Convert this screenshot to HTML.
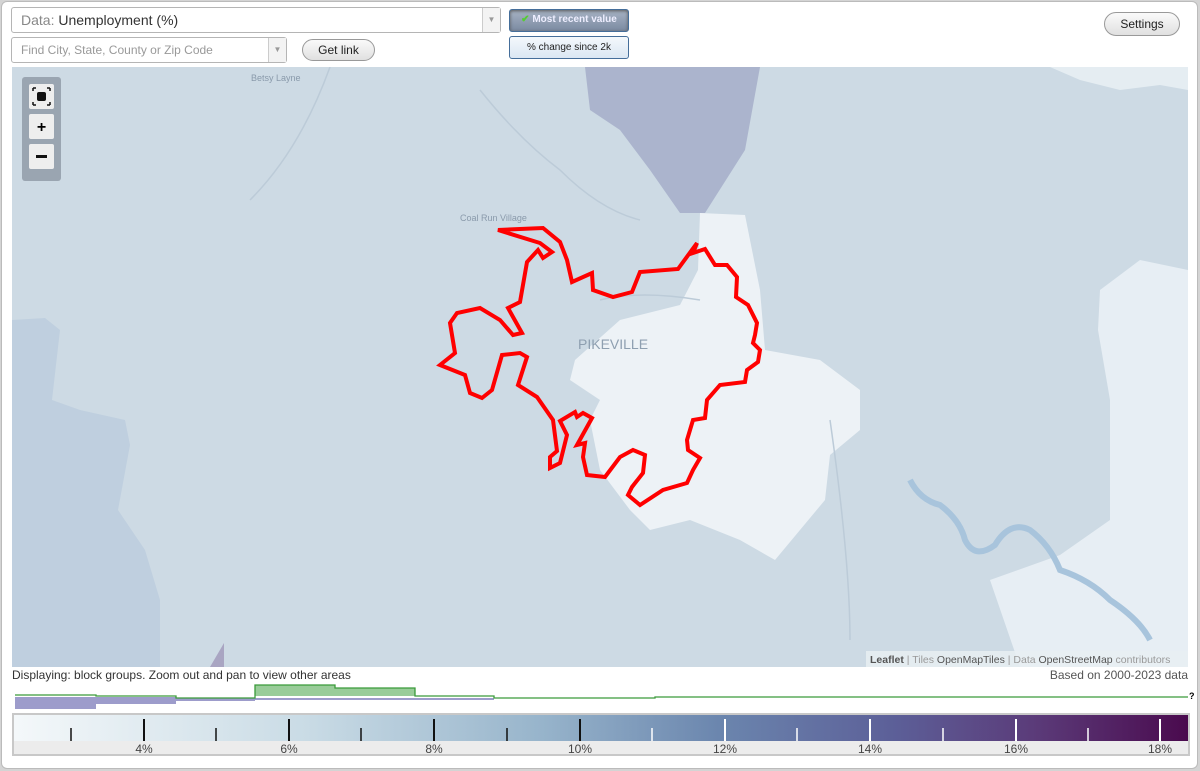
<!DOCTYPE html>
<html><head><meta charset="utf-8"><style>
*{box-sizing:border-box;margin:0;padding:0}
body{width:1200px;height:771px;background:#d4d4d4;font-family:"Liberation Sans",Arial,sans-serif;position:relative;overflow:hidden}
.frame{position:absolute;left:1px;top:1px;width:1197px;height:768px;background:#fff;border:1px solid #bbb;border-radius:6px}
.sel{position:absolute;background:#fff;border:1px solid #b5b5b5;border-radius:3px;color:#999}
.sel .arr{position:absolute;right:0;top:0;bottom:0;width:18px;border-left:1px solid #ccc;background:#f3f3f3;color:#999;font-size:8px;text-align:center}
.btn{position:absolute;border:1px solid #999;border-radius:12px;background:linear-gradient(#fafafa,#e0e0e0);font-size:12px;color:#222;text-align:center}
.tog{position:absolute;border:1px solid #456e9a;border-radius:3px;font-size:10px;text-align:center}
.lbl{position:absolute;font-size:12px;color:#333}
</style></head><body>
<div class="frame"></div>
<div class="sel" style="left:11px;top:7px;width:490px;height:26px;font-size:14px;line-height:24px;padding-left:9px;color:#888">Data: <span style="color:#333">Unemployment (%)</span><div class="arr" style="line-height:24px">▼</div></div>
<div class="sel" style="left:11px;top:37px;width:276px;height:26px;font-size:12px;line-height:24px;padding-left:9px">Find City, State, County or Zip Code<div class="arr" style="line-height:24px">▼</div></div>
<div class="btn" style="left:302px;top:39px;width:73px;height:22px;line-height:20px">Get link</div>
<div class="tog" style="left:509px;top:9px;width:120px;height:23px;line-height:20px;background:linear-gradient(#a7b3c4,#7b8aa1);color:#eef;font-weight:bold;box-shadow:inset 0 1px 3px #555"><span style="color:#5c3">✔</span> Most recent value</div>
<div class="tog" style="left:509px;top:36px;width:120px;height:23px;line-height:21px;background:linear-gradient(#f4f8fc,#dbe7f3);color:#222">% change since 2k</div>
<div class="btn" style="left:1104px;top:12px;width:76px;height:24px;line-height:22px">Settings</div>

<svg style="position:absolute;left:12px;top:67px" width="1176" height="600" viewBox="12 67 1176 600">
<rect x="12" y="67" width="1176" height="600" fill="#cddae4"/>
<path d="M12 320 L45 318 L60 330 L52 400 L80 410 L125 420 L130 445 L118 510 L145 550 L160 600 L160 667 L12 667Z" fill="#bfcfdf"/>
<path d="M585 67 L760 67 L745 150 L705 213 L680 213 L650 170 L620 130 L590 110Z" fill="#abb4cd"/>
<path d="M210 667 L224 643 L224 667Z" fill="#a9a5c2"/>
<path d="M700 213 L745 215 L760 290 L765 350 L820 360 L860 390 L860 430 L830 455 L825 500 L800 530 L775 560 L740 540 L690 520 L650 530 L630 510 L600 470 L590 420 L600 400 L570 380 L575 360 L620 320 L680 305 L698 270Z" fill="#edf2f6"/>
<path d="M1100 290 L1140 260 L1188 270 L1188 667 L1020 667 L990 580 L1060 555 L1110 520 L1110 400 L1098 330Z" fill="#e7eef4"/>
<path d="M1050 67 L1188 67 L1188 90 L1160 85 L1120 90 L1080 80Z" fill="#e5edf2"/>
<path d="M910 480 Q920 500 940 505 Q960 520 965 540 Q975 560 995 545 Q1010 520 1030 530 Q1050 545 1060 570 Q1090 580 1110 600 Q1140 620 1150 640" stroke="#a8c4dc" stroke-width="6" fill="none"/>
<path d="M480 90 Q520 140 560 170 Q600 210 640 220 M330 67 Q300 150 250 200 M600 300 Q640 290 700 300 M830 420 Q850 560 850 640" stroke="#bccbd8" stroke-width="1.5" fill="none"/>
<path d="M498 230 L543 228 L560 242 L567 260 L572 282 L592 273 L593 290 L613 297 L632 292 L640 272 L678 269 L697 243 L693 253 L705 249 L715 265 L727 265 L737 277 L736 297 L748 305 L757 323 L755 335 L753 343 L760 350 L758 362 L747 370 L745 382 L720 385 L707 400 L705 418 L693 420 L687 440 L688 450 L700 458 L693 470 L687 483 L663 490 L640 505 L628 495 L632 487 L643 473 L645 455 L633 450 L620 457 L605 477 L587 475 L583 457 L585 443 L577 445 L592 418 L583 413 L577 417 L575 412 L560 421 L567 435 L560 463 L550 468 L550 457 L557 451 L553 420 L537 397 L518 385 L527 357 L520 353 L502 355 L492 390 L482 398 L470 393 L465 375 L440 365 L455 353 L450 323 L457 313 L480 308 L500 320 L513 335 L522 333 L508 308 L520 302 L527 262 L538 250 L543 258 L552 252 L540 243 Z" fill="none" stroke="#f00" stroke-width="4" stroke-linejoin="miter"/>
<text x="578" y="349" font-size="14" fill="#8e9fb0" font-family="Liberation Sans">PIKEVILLE</text>
<text x="460" y="221" font-size="9" fill="#8a9aab" font-family="Liberation Sans">Coal Run Village</text>
<text x="251" y="81" font-size="9" fill="#8a9aab" font-family="Liberation Sans">Betsy Layne</text>
<rect x="22" y="77" width="39" height="104" rx="3" fill="#9aa5b1"/>
<rect x="29" y="84" width="25" height="25" rx="2" fill="#eee"/>
<rect x="37" y="92" width="9" height="9" rx="2" fill="#111"/>
<path d="M33 88 h3 M33 88 v3 M50 88 h-3 M50 88 v3 M33 105 h3 M33 105 v-3 M50 105 h-3 M50 105 v-3" stroke="#111" stroke-width="1.5"/>
<rect x="29" y="114" width="25" height="25" rx="2" fill="#eee"/>
<text x="41.5" y="132" font-size="16" font-weight="bold" text-anchor="middle">+</text>
<rect x="29" y="144" width="25" height="25" rx="2" fill="#eee"/>
<rect x="36" y="155" width="11" height="3" fill="#111"/>
<rect x="866" y="651" width="322" height="16" fill="#e8eef2" opacity=".85"/>
<text x="870" y="663" font-size="10.5" fill="#999" font-family="Liberation Sans"><tspan fill="#555" font-weight="bold">Leaflet</tspan> | Tiles <tspan fill="#555">OpenMapTiles</tspan> | Data <tspan fill="#555">OpenStreetMap</tspan> contributors</text>
</svg>

<div class="lbl" style="left:12px;top:668px">Displaying: block groups. Zoom out and pan to view other areas</div>
<div class="lbl" style="right:12px;top:668px;color:#555">Based on 2000-2023 data</div>

<svg style="position:absolute;left:0;top:680px" width="1200" height="35">
<path d="M15 17 H96 V29 H15Z M96 17 H176 V24 H96Z M176 18 H255 V21 H176Z M255 18 H494 V20 H255Z" fill="#9d9ccb"/>
<path d="M255 5 H335 V16 H255Z M335 8 H415 V16 H335Z" fill="#99cc99"/>
<path d="M15 15 H96 V16 H176 V18 H255 V5 H335 V8 H415 V16 H494 V18 H655 V17 H1188" stroke="#3a9a3a" stroke-width="1.3" fill="none"/>
<text x="1189" y="19" font-size="9" font-weight="bold">?</text>
</svg>

<div style="position:absolute;left:12px;top:713px;width:1178px;height:43px;border:2px solid #c8c8c8;background:#ececec">
<div style="position:absolute;left:0;top:0;right:0;height:26px;background:linear-gradient(to right,#f4f8fa,#c9dbe5 25%,#97b4cb 45%,#6b86ae 60%,#5c5f98 75%,#5b3b79 87%,#4a0a4e)"></div>
<svg style="position:absolute;left:0;top:0" width="1176" height="41">
<g stroke-width="1.5">
<line x1="57" y1="13" x2="57" y2="26" stroke="#111"/><line x1="130" y1="4" x2="130" y2="26" stroke="#111" stroke-width="2"/>
<line x1="202" y1="13" x2="202" y2="26" stroke="#111"/><line x1="275" y1="4" x2="275" y2="26" stroke="#111" stroke-width="2"/>
<line x1="347" y1="13" x2="347" y2="26" stroke="#111"/><line x1="420" y1="4" x2="420" y2="26" stroke="#111" stroke-width="2"/>
<line x1="493" y1="13" x2="493" y2="26" stroke="#111"/><line x1="566" y1="4" x2="566" y2="26" stroke="#111" stroke-width="2"/>
<line x1="638" y1="13" x2="638" y2="26" stroke="#fff"/><line x1="711" y1="4" x2="711" y2="26" stroke="#fff" stroke-width="2"/>
<line x1="783" y1="13" x2="783" y2="26" stroke="#fff"/><line x1="856" y1="4" x2="856" y2="26" stroke="#fff" stroke-width="2"/>
<line x1="929" y1="13" x2="929" y2="26" stroke="#fff"/><line x1="1002" y1="4" x2="1002" y2="26" stroke="#fff" stroke-width="2"/>
<line x1="1074" y1="13" x2="1074" y2="26" stroke="#fff"/><line x1="1146" y1="4" x2="1146" y2="26" stroke="#fff" stroke-width="2"/>
</g>
<g font-size="12" fill="#444" text-anchor="middle" font-family="Liberation Sans">
<text x="130" y="38">4%</text><text x="275" y="38">6%</text><text x="420" y="38">8%</text><text x="566" y="38">10%</text>
<text x="711" y="38">12%</text><text x="856" y="38">14%</text><text x="1002" y="38">16%</text><text x="1146" y="38">18%</text>
</g></svg>
</div>
</body></html>
